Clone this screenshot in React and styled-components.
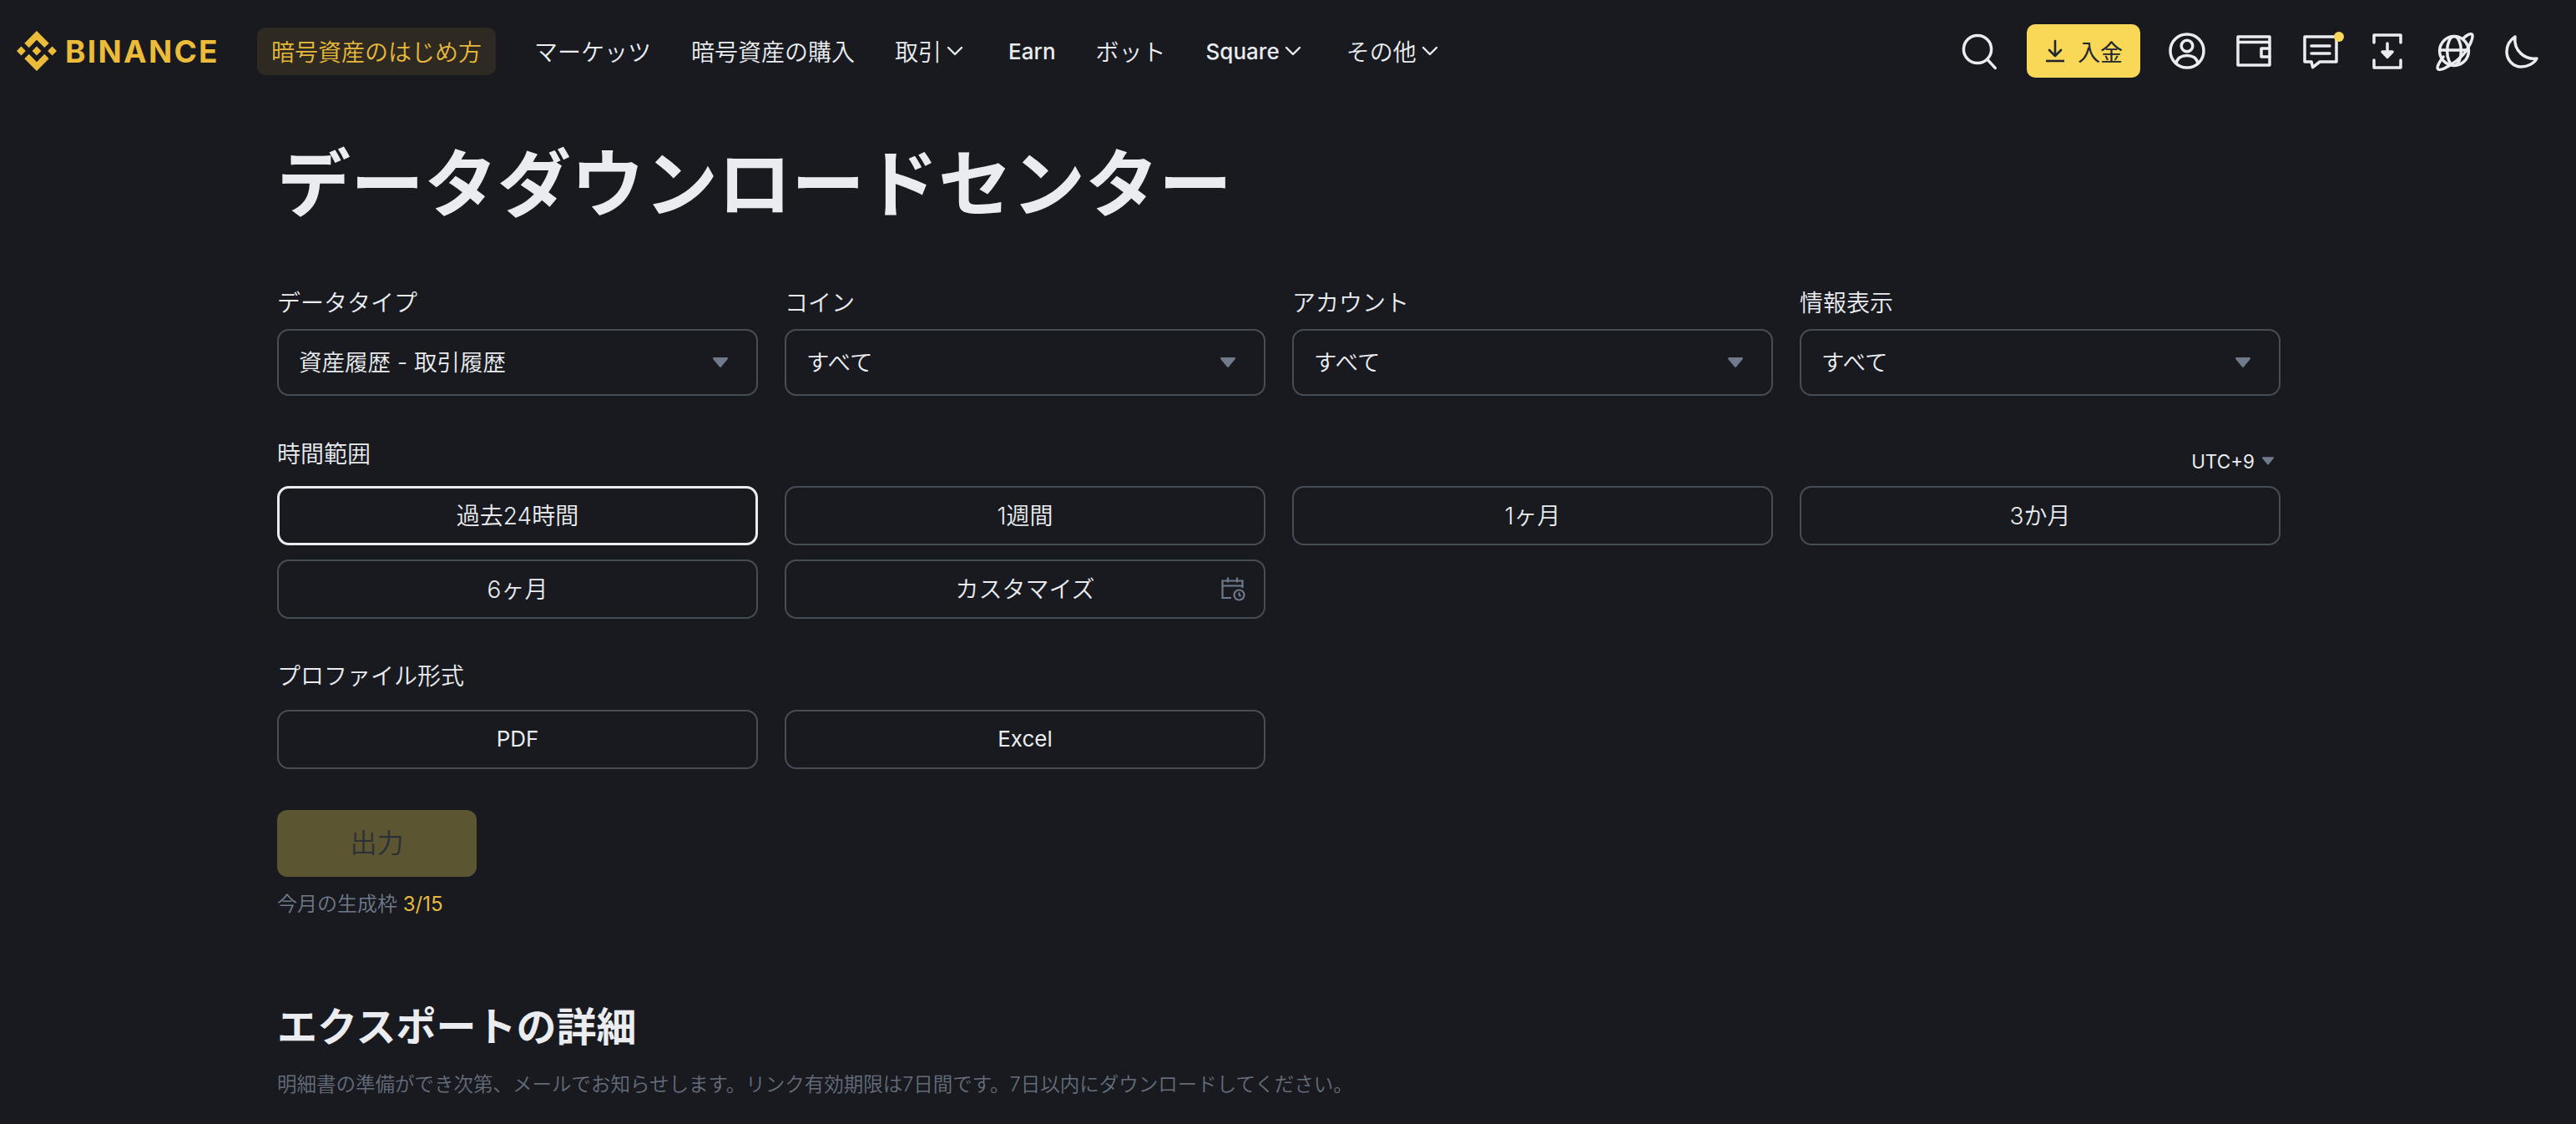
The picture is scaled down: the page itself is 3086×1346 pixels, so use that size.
import styled, { createGlobalStyle } from "styled-components";
import { SiBinance } from "react-icons/si";

const GlobalStyle = createGlobalStyle`
  * { box-sizing: border-box; }
  html, body { margin: 0; background: #181a20; }
  body {
    font-family: Inter, "Noto Sans CJK JP", sans-serif;
    font-weight: 350;
    color: #eaecef;
  }
`;

const Chevron = () => (
  <ChevronSvg viewBox="0 0 20 12" fill="none" stroke="currentColor" strokeWidth="2.4" strokeLinecap="round" strokeLinejoin="round">
    <path d="M2 2l8 8 8-8" />
  </ChevronSvg>
);

const Caret = ({ small }) => (
  <CaretSvg $small={small} viewBox="0 0 18 12" fill="#707a8a">
    <path d="M1.2 0h15.6c1 0 1.5 1.1.9 1.9L9.9 11.4c-.5.6-1.3.6-1.8 0L.3 1.9C-.3 1.1.2 0 1.2 0z" />
  </CaretSvg>
);

const IconSvg = ({ children }) => (
  <svg width="48" height="48" viewBox="0 0 24 24" fill="none" stroke="currentColor" strokeWidth="1.75" strokeLinecap="round" strokeLinejoin="round">
    {children}
  </svg>
);

const navItems = [
  { label: "マーケッツ" },
  { label: "暗号資産の購入" },
  { label: "取引", more: true },
  { label: "Earn", latin: true },
  { label: "ボット" },
  { label: "Square", more: true, latin: true },
  { label: "その他", more: true },
];

const selects = [
  { label: "データタイプ", value: "資産履歴 - 取引履歴" },
  { label: "コイン", value: "すべて" },
  { label: "アカウント", value: "すべて" },
  { label: "情報表示", value: "すべて" },
];

const ranges = ["過去24時間", "1週間", "1ヶ月", "3か月", "6ヶ月"];

export default function App() {
  return (
    <>
      <GlobalStyle />
      <Header>
        <Logo>
          <LogoMark size={48} />
          <LogoText>BINANCE</LogoText>
        </Logo>
        <Nav>
          <NavItem $active>暗号資産のはじめ方</NavItem>
          {navItems.map((item) => (
            <NavItem key={item.label} $latin={item.latin}>
              {item.label}
              {item.more && <Chevron />}
            </NavItem>
          ))}
        </Nav>
        <Actions>
          <IconButton>
            <IconSvg>
              <circle cx="10.5" cy="11" r="8.3" />
              <path d="M16.5 17.2l4.6 5" />
            </IconSvg>
          </IconButton>
          <Deposit>
            <svg width="26" height="28" viewBox="0 0 26 28" fill="none" stroke="currentColor" strokeWidth="2.6" strokeLinecap="round" strokeLinejoin="round">
              <path d="M13 2v17M6 13l7 7 7-7" />
              <path d="M2 26h22" strokeLinecap="butt" />
            </svg>
            入金
          </Deposit>
          <IconButton>
            <IconSvg>
              <circle cx="12" cy="12" r="10" />
              <circle cx="12" cy="9" r="3.4" />
              <path d="M5.5 19.5c.6-3.2 3.2-4.8 6.5-4.8s5.900 1.600 6.500 4.800" />
            </IconSvg>
          </IconButton>
          <IconButton>
            <IconSvg>
              <path d="M2.500 3.500h19v17h-19zM2.500 6.700h19" />
              <path d="M21.500 10.500h-5v5h5" />
            </IconSvg>
          </IconButton>
          <IconButton>
            <IconSvg>
              <path d="M2.500 3.500h19v15h-10l-4.200 3.300-.8-3.300h-4z" />
              <path d="M6.500 9h11M6.500 13.500h11" />
            </IconSvg>
            <Dot />
          </IconButton>
          <IconButton>
            <IconSvg>
              <path d="M4 7V2.500h16V7M4 17.500v4.500h16v-4.500" />
              <path d="M12 7.500v7" />
              <path d="M9 12.500h6l-3 3.200z" fill="currentColor" />
            </IconSvg>
          </IconButton>
          <IconButton>
            <IconSvg>
              <circle cx="12" cy="12" r="8.700" />
              <ellipse cx="12" cy="12" rx="4.200" ry="8.700" />
              <path d="M3.300 11.500h17.400" />
              <path d="M5.500 15.500C2.500 19.500 1.300 22.300 2.500 23c2 1.100 10-3.700 14.500-8.300C21 10.500 23.700 3.800 22.800 2.200c-.8-1-3.300.2-5.300 2.300" />
            </IconSvg>
          </IconButton>
          <IconButton>
            <IconSvg>
              <path d="M8.500 3.500C5.500 5.500 3.500 8.500 3.500 12.500c0 5 4 9 8.500 9 4 0 8-2 9.500-5-7 1-14-4.500-13-13z" />
            </IconSvg>
          </IconButton>
        </Actions>
      </Header>

      <Main>
        <Title>データダウンロードセンター</Title>

        <Columns>
          {selects.map((s) => (
            <div key={s.label}>
              <Label>{s.label}</Label>
              <Select>
                <span>{s.value}</span>
                <Caret />
              </Select>
            </div>
          ))}
        </Columns>

        <RangeHead>
          <Label>時間範囲</Label>
          <Zone>
            UTC+9
            <Caret small />
          </Zone>
        </RangeHead>
        <OptionGrid>
          {ranges.map((r, i) => (
            <Option key={r} $selected={i === 0}>
              {r}
            </Option>
          ))}
          <Option>
            カスタマイズ
            <CalendarSvg viewBox="0 0 30 30" fill="none" stroke="currentColor" strokeWidth="2.200">
              <path d="M13 26H2.500V5.500h24V14M2.500 11.500h24M9 1.500v6M20 1.500v6" />
              <circle cx="22.500" cy="22.500" r="6" />
              <path d="M22.500 19.500v3.200l2 1.500" />
            </CalendarSvg>
          </Option>
        </OptionGrid>

        <FormatLabel>プロファイル形式</FormatLabel>
        <OptionGrid>
          <Option $latin>PDF</Option>
          <Option $latin>Excel</Option>
        </OptionGrid>

        <ExportButton>出力</ExportButton>
        <Quota>
          今月の生成枠 <span>3/15</span>
        </Quota>

        <Heading>エクスポートの詳細</Heading>
        <Note>
          明細書の準備ができ次第、メールでお知らせします。リンク有効期限は7日間です。7日以内にダウンロードしてください。
        </Note>
      </Main>
    </>
  );
}

const Header = styled.header`
  display: flex;
  align-items: center;
  height: 122px;
  padding: 0 42px 0 20px;
`;

const Logo = styled.div`
  display: flex;
  align-items: center;
  gap: 10px;
  width: 239px;
  color: #ebbb3a;
`;

const LogoMark = styled(SiBinance)`
  flex: none;
`;

const LogoText = styled.span`
  font-family: Inter, sans-serif;
  font-size: 37px;
  font-weight: 700;
  letter-spacing: 2.3px;
  line-height: 1;
`;

const Nav = styled.nav`
  display: flex;
  align-items: center;
  gap: 14px;
  margin-left: 49px;
`;

const NavItem = styled.a`
  display: flex;
  align-items: center;
  gap: 6px;
  height: 57px;
  padding: 0 17px;
  margin-right: ${(p) => (p.$active ? "15px" : "0")};
  border-radius: 10px;
  font-size: ${(p) => (p.$latin ? "26px" : "28px")};
  font-weight: ${(p) => (p.$latin ? 450 : 350)};
  color: ${(p) => (p.$active ? "#e8b93c" : "#eaecef")};
  background: ${(p) => (p.$active ? "#2e2a22" : "transparent")};
  white-space: nowrap;
`;

const ChevronSvg = styled.svg`
  width: 20px;
  height: 12px;
  margin-right: 6px;
`;

const CaretSvg = styled.svg`
  width: ${(p) => (p.$small ? "14px" : "18px")};
  height: ${(p) => (p.$small ? "10px" : "12px")};
  flex: none;
`;

const Actions = styled.div`
  display: flex;
  align-items: center;
  gap: 32px;
  margin-left: auto;
`;

const IconButton = styled.div`
  position: relative;
  display: flex;
  width: 48px;
  height: 48px;
  color: #eaecef;
`;

const Dot = styled.span`
  position: absolute;
  top: 1px;
  right: -4px;
  width: 12px;
  height: 12px;
  border-radius: 50%;
  background: #f8d856;
`;

const Deposit = styled.button`
  display: flex;
  align-items: center;
  justify-content: center;
  gap: 14px;
  width: 136px;
  height: 64px;
  padding: 0;
  border: 0;
  border-radius: 10px;
  background: #f8d856;
  color: #202630;
  font-family: inherit;
  font-size: 27px;
  font-weight: 400;
`;

const Main = styled.main`
  width: 2400px;
  margin-left: 332px;
`;

const Title = styled.h1`
  margin: 42px 0 66px;
  font-size: 88px;
  line-height: 112px;
  font-weight: 600;
  color: #eaecef;
`;

const Columns = styled.div`
  display: grid;
  grid-template-columns: repeat(4, 1fr);
  gap: 32px;
`;

const OptionGrid = styled(Columns)`
  gap: 17px 32px;
`;

const Label = styled.div`
  height: 40px;
  margin-bottom: 12px;
  font-size: 28px;
  line-height: 43px;
  color: #eaecef;
`;

const Select = styled.div`
  display: flex;
  align-items: center;
  justify-content: space-between;
  height: 80px;
  padding: 0 34px 0 24px;
  border: 2px solid #474d57;
  border-radius: 14px;
  font-size: 27.5px;
  color: #eaecef;
  span {
    padding-bottom: 5px;
  }
`;

const RangeHead = styled.div`
  display: flex;
  align-items: flex-start;
  justify-content: space-between;
  height: 59px;
  margin-top: 49px;
`;

const Zone = styled.div`
  display: flex;
  align-items: center;
  gap: 9px;
  height: 30px;
  margin: 14px 8px 0 0;
  font-size: 22.5px;
  font-weight: 400;
  color: #eaecef;
`;

const Option = styled.button`
  position: relative;
  display: flex;
  align-items: center;
  justify-content: center;
  height: 71px;
  padding: 0 0 3px;
  border: ${(p) => (p.$selected ? "3.5px solid #eaecef" : "2px solid #474d57")};
  border-radius: 14px;
  background: transparent;
  color: #eaecef;
  font-family: inherit;
  font-size: ${(p) => (p.$latin ? "26px" : "28px")};
  font-weight: ${(p) => (p.$latin ? 400 : 350)};
`;

const CalendarSvg = styled.svg`
  position: absolute;
  top: 18px;
  right: 22px;
  width: 30px;
  height: 30px;
  color: #707a8a;
`;

const FormatLabel = styled(Label)`
  margin: 48px 0 21px;
`;

const ExportButton = styled.button`
  display: block;
  width: 239px;
  height: 80px;
  margin-top: 49px;
  padding: 0 0 6px;
  border: 0;
  border-radius: 12px;
  background: #5c5531;
  color: #2b2f36;
  font-family: inherit;
  font-size: 32px;
  font-weight: 350;
`;

const Quota = styled.div`
  margin-top: 18px;
  font-size: 24px;
  line-height: 30px;
  color: #707a8a;
  span {
    color: #e8b93c;
    font-weight: 400;
  }
`;

const Heading = styled.h2`
  margin: 100px 0 17px;
  font-size: 48px;
  line-height: 64px;
  font-weight: 600;
  color: #eaecef;
`;

const Note = styled.p`
  margin: 0;
  font-size: 23.5px;
  line-height: 40px;
  color: #656d7a;
`;
